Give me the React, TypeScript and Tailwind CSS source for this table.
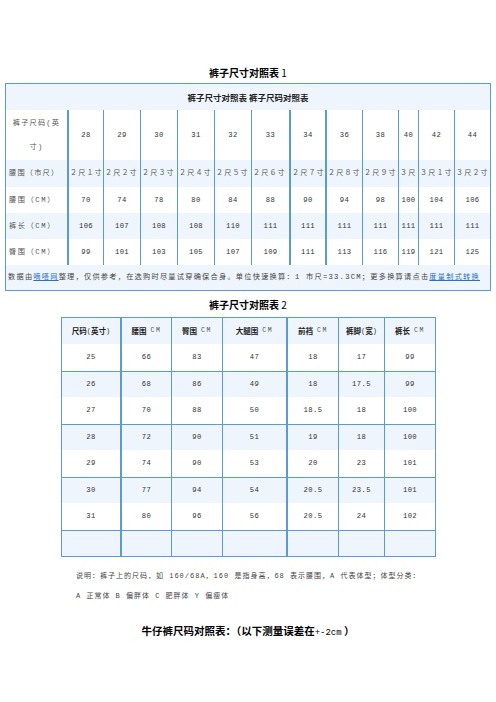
import React from "react";

const F = "font-['Liberation_Mono','Noto_Sans_CJK_SC',monospace]";
const H = "font-['Noto_Sans_CJK_SC',sans-serif]";

const cols = [
  "w-[36px] border-l-2",
  "w-[37px] border-l",
  "w-[37px] border-l",
  "w-[37px] border-l",
  "w-[37px] border-l",
  "w-[38px] border-l",
  "w-[36px] border-l-2",
  "w-[37px] border-l-2",
  "w-[36px] border-l",
  "w-[20px] border-l",
  "w-[36px] border-l",
  "w-[36px] border-l",
];

const sizes = ["28", "29", "30", "31", "32", "33", "34", "36", "38", "40", "42", "44"];
const shichi = [
  "２尺１寸", "２尺２寸", "２尺３寸", "２尺４寸", "２尺５寸", "２尺６寸",
  "２尺７寸", "２尺８寸", "２尺９寸", "３尺", "３尺１寸", "３尺２寸",
];
const waist = ["70", "74", "78", "80", "84", "88", "90", "94", "98", "100", "104", "106"];
const length = ["106", "107", "108", "108", "110", "111", "111", "111", "111", "111", "111", "111"];
const hip = ["99", "101", "103", "105", "107", "109", "111", "113", "116", "119", "121", "125"];

function Row1({
  label,
  values,
  bg,
  h,
  labelCls,
  valCls,
}: {
  label: React.ReactNode;
  values: string[];
  bg: string;
  h: string;
  labelCls: string;
  valCls: string;
}) {
  return (
    <div className={`flex ${h} ${bg}`}>
      <div className={`w-[61px] shrink-0 flex items-center whitespace-nowrap ${labelCls}`}>{label}</div>
      {values.map((v, i) => (
        <div
          key={i}
          className={`${cols[i]} shrink-0 border-[#5b9bd5] flex items-center justify-center whitespace-nowrap overflow-hidden ${valCls}`}
        >
          {v}
        </div>
      ))}
    </div>
  );
}

const t2cols = [
  "w-[58px]",
  "w-[51px] border-l-2",
  "w-[51px] border-l",
  "w-[64px] border-l",
  "w-[52px] border-l-2",
  "w-[46px] border-l",
  "w-[51px] border-l",
];

const t2rows: string[][] = [
  ["25", "66", "83", "47", "18", "17", "99"],
  ["26", "68", "86", "49", "18", "17.5", "99"],
  ["27", "70", "88", "50", "18.5", "18", "100"],
  ["28", "72", "90", "51", "19", "18", "100"],
  ["29", "74", "90", "53", "20", "23", "101"],
  ["30", "77", "94", "54", "20.5", "23.5", "101"],
  ["31", "80", "96", "56", "20.5", "24", "102"],
  ["", "", "", "", "", "", ""],
];

const hb = `${H} text-[7.5px] text-[#222] font-bold`;

export default function App() {
  return (
    <div className={`w-[496px] h-[702px] bg-white overflow-hidden ${F}`}>
      <div className={`mt-[66px] h-[14px] leading-[14px] text-center text-[10px] font-bold text-black ${H}`}>
        裤子尺寸对照表 <span className="font-normal">1</span>
      </div>

      {/* Table 1 */}
      <div className="mt-[3px] ml-[5px] w-[486px] border border-[#5b9bd5] text-[#333]">
        <div className={`h-[26px] bg-[#eef5fc] flex items-center justify-center text-[8.5px] font-bold text-[#222] ${H}`}>
          裤子尺寸对照表 裤子尺码对照表
        </div>
        <Row1
          label={
            <div className="w-full text-center leading-[24px] text-[7.2px] tracking-[1.2px] text-[#555]">
              裤子尺码(英
              <br />
              寸)
            </div>
          }
          values={sizes}
          bg="bg-white"
          h="h-[50px]"
          labelCls=""
          valCls="text-[7.2px] tracking-[0.4px]"
        />
        <Row1
          label="腰围（市尺）"
          values={shichi}
          bg="bg-[#eef5fc]"
          h="h-[27px]"
          labelCls="pl-[3px] text-[7.2px] tracking-[1.2px] text-[#555]"
          valCls="text-[7px] tracking-[1.2px] justify-start pl-px text-[#555]"
        />
        <Row1
          label="腰围（CM）"
          values={waist}
          bg="bg-white"
          h="h-[26px]"
          labelCls="pl-[3px] text-[7.2px] tracking-[1.6px] text-[#555]"
          valCls="text-[7.2px] tracking-[0.4px]"
        />
        <Row1
          label="裤长（CM）"
          values={length}
          bg="bg-[#eef5fc]"
          h="h-[26px]"
          labelCls="pl-[3px] text-[7.2px] tracking-[1.6px] text-[#555]"
          valCls="text-[7.2px] tracking-[0.4px]"
        />
        <Row1
          label="臀围（CM）"
          values={hip}
          bg="bg-white"
          h="h-[26px]"
          labelCls="pl-[3px] text-[7.2px] tracking-[1.6px] text-[#555]"
          valCls="text-[7.2px] tracking-[0.4px]"
        />
        <div className="h-[25px] bg-[#eef5fc] flex items-center pl-[2px] whitespace-nowrap text-[7.2px] tracking-[1.25px] text-[#444]">
          数据由<span className="text-[#2f6fc0] underline">嘀嗒网</span>整理，仅供参考，在选购时尽量试穿确保合身。单位快速换算：1 市尺=33.3CM；更多换算请点击
          <span className="text-[#2f6fc0] underline">度量制式转换</span>
        </div>
      </div>

      <div className={`mt-[7px] h-[14px] leading-[14px] text-center text-[10px] font-bold text-black ${H}`}>
        裤子尺寸对照表 <span className="font-normal">2</span>
      </div>

      {/* Table 2 */}
      <div className="mt-[5px] ml-[61px] w-[375px] border border-[#5b9bd5] text-[#333]">
        <div className="flex h-[26px] bg-[#eef5fc]">
          {[
            <>
              <span className={hb}>尺码</span>
              <span className="text-[7px]">(</span>
              <span className={hb}>英寸</span>
              <span className="text-[7px]">)</span>
            </>,
            <>
              <span className={hb}>腰围</span>
              <span className="text-[6.5px] tracking-[1.5px] ml-[4px] text-[#555]">CM</span>
            </>,
            <>
              <span className={hb}>臀围</span>
              <span className="text-[6.5px] tracking-[1.5px] ml-[4px] text-[#555]">CM</span>
            </>,
            <>
              <span className={hb}>大腿围</span>
              <span className="text-[6.5px] tracking-[1.5px] ml-[4px] text-[#555]">CM</span>
            </>,
            <>
              <span className={hb}>前裆</span>
              <span className="text-[6.5px] tracking-[1.5px] ml-[4px] text-[#555]">CM</span>
            </>,
            <>
              <span className={hb}>裤脚</span>
              <span className="text-[7px]">(</span>
              <span className={hb}>宽</span>
              <span className="text-[7px]">)</span>
            </>,
            <>
              <span className={hb}>裤长</span>
              <span className="text-[6.5px] tracking-[1.5px] ml-[4px] text-[#555]">CM</span>
            </>,
          ].map((c, i) => (
            <div
              key={i}
              className={`${t2cols[i]} shrink-0 border-[#5b9bd5] flex items-center justify-center whitespace-nowrap`}
            >
              {c}
            </div>
          ))}
        </div>
        {t2rows.map((r, ri) => (
          <div
            key={ri}
            className={`flex h-[26.5px] ${ri % 2 === 0 ? "bg-white" : "bg-[#eef5fc] border-t border-[#5b9bd5]"}`}
          >
            {r.map((v, i) => (
              <div
                key={i}
                className={`${t2cols[i]} shrink-0 border-[#5b9bd5] flex items-center justify-center text-[7.2px] tracking-[0.4px]`}
              >
                {v}
              </div>
            ))}
          </div>
        ))}
      </div>

      <div className="mt-[9px] ml-[76px] text-[7px] leading-[20px] tracking-[1px] text-[#444] whitespace-nowrap">
        <div>说明：裤子上的尺码，如 160/68A，160 是指身高，68 表示腰围，A 代表体型；体型分类：</div>
        <div>A 正常体 B 偏胖体 C 肥胖体 Y 偏瘦体</div>
      </div>

      <div className={`mt-[18px] text-center text-[10.5px] leading-[14px] font-bold text-black ${H}`}>
        牛仔裤尺码对照表：（以下测量误差在<span className={`${F} font-normal text-[9px]`}>+-2cm</span> ）
      </div>
    </div>
  );
}
